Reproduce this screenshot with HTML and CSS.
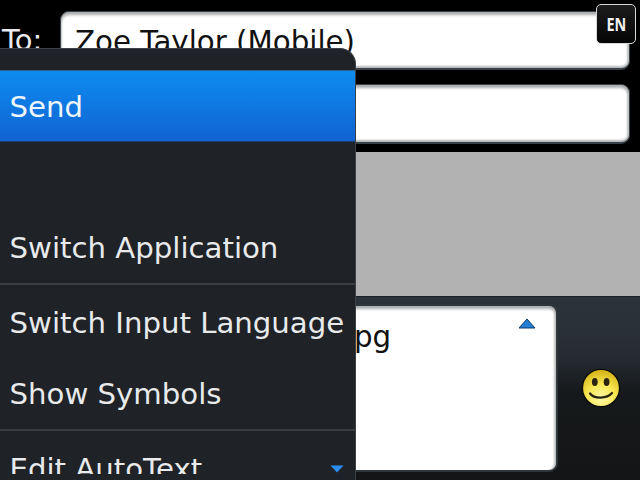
FILE: index.html
```html
<!DOCTYPE html>
<html lang="en">
<head>
<meta charset="utf-8">
<title>Compose message</title>
<link rel="stylesheet" href="styles.css">
</head>
<body>
<div class="screen">
  <header class="fields">
    <div class="field-row">
      <span class="to-label">To:</span>
      <div class="field field-to">Zoe Taylor (Mobile)</div>
    </div>
    <div class="field-row field-row-second">
      <div class="field field-second"></div>
    </div>
  </header>
  <div class="grey-area"></div>
  <div class="compose">
    <div class="compose-box">
      <span class="compose-text">pg</span>
      <svg class="scroll-up" width="18" height="11" viewBox="0 0 18 11"><path d="M1 10 L9 1 L17 10 Z" fill="#1f7fd6" stroke="#123a66" stroke-width="1"/></svg>
    </div>
    <div class="smiley-cell">
      <svg width="40" height="40" viewBox="0 0 40 40">
        <defs>
          <radialGradient id="face" cx="50%" cy="78%" r="72%">
            <stop offset="0" stop-color="#fff9a8"/>
            <stop offset="0.55" stop-color="#f8e650"/>
            <stop offset="1" stop-color="#d8b81c"/>
          </radialGradient>
        </defs>
        <circle cx="20" cy="20" r="18.6" fill="url(#face)" stroke="#0c0c08" stroke-width="1.4"/>
        <ellipse cx="13.8" cy="14" rx="2.9" ry="4" fill="#2a2410"/>
        <ellipse cx="25.6" cy="14" rx="2.9" ry="4" fill="#2a2410"/>
        <path d="M9 25.5 C13 31 26 31 31 25" fill="none" stroke="#2a2410" stroke-width="2.2" stroke-linecap="round"/>
      </svg>
    </div>
  </div>

  <div class="lang-badge"><span class="lang-text">EN</span></div>

  <nav class="menu">
    <div class="menu-item selected">Send</div>
    <div class="menu-item"></div>
    <div class="menu-item divided first-group">Switch Application</div>
    <div class="menu-item tall">Switch Input Language</div>
    <div class="menu-item divided short">Show Symbols</div>
    <div class="menu-item last">Edit AutoText</div>
    <svg class="scroll-down" width="14" height="8" viewBox="0 0 14 8"><path d="M0.5 0.5 H13.5 L7 7.5 Z" fill="#2a8ff0"/></svg>
  </nav>
</div>
</body>
</html>
```

FILE: styles.css
```css
* { box-sizing: border-box; }
html, body { margin: 0; padding: 0; }
body {
  width: 640px;
  height: 480px;
  overflow: hidden;
  background: #000;
  font-family: "DejaVu Sans", sans-serif;
}
.screen {
  position: relative;
  width: 640px;
  height: 480px;
  display: flex;
  flex-direction: column;
  overflow: hidden;
}
.fields {
  height: 152px;
  padding: 10px 10px 0 2px;
  background: #000;
}
.field-row { display: flex; align-items: center; }
.field-row-second { margin-top: 14px; padding-left: 58px; }
.to-label {
  width: 58px;
  font-size: 29px;
  line-height: 59px;
  padding-top: 1px;
  color: #e8eaec;
}
.field {
  flex: 1;
  border: 1px solid #3a4249;
  border-bottom-width: 2px;
  border-radius: 9px;
  background: #fff;
  box-shadow: inset 0 4px 3px -1px #a9abac, inset 0 -3px 2px -1px #b5b7b8, inset 2px 0 2px -1px #c8caca, inset -3px 0 2px -1px #c0c2c2;
  color: #111;
  font-size: 29.3px;
}
.field-to { height: 59px; line-height: 60px; padding-left: 14px; }
.field-second { height: 60px; }
.grey-area { height: 144px; background: #b2b2b2; }
.compose {
  flex: 1;
  display: flex;
  padding: 7px 0 8px 60px;
  background: linear-gradient(#2c343b 0, #262c32 32%, #16191b 52%, #141516 100%);
  border-top: 1px solid #1d2226;
}
.compose-box {
  position: relative;
  width: 498px;
  border: 2px solid #2f363c;
  border-radius: 9px;
  background: #fff;
  box-shadow: inset 0 5px 3px -2px #a9abac, inset -3px 0 2px -1px #c0c2c2;
  color: #111;
  font-size: 29.3px;
  line-height: 62px;
  padding: 0 0 0 292px;
}
.scroll-up { position: absolute; top: 12px; right: 20px; }
.smiley-cell {
  flex: 1;
  display: flex;
  align-items: center;
  justify-content: center;
  padding: 0 2px 0 6px;
}
.lang-badge {
  position: absolute;
  top: 4px;
  left: 596px;
  width: 40px;
  height: 40px;
  border: 1px solid #d8d8d8;
  border-radius: 5px;
  background: linear-gradient(#1c1c1c, #050505);
  color: #f2f2f2;
  font-family: "Open Sans", "Noto Sans", sans-serif;
  font-weight: 700;
  font-size: 18px;
  line-height: 38px;
  text-align: center;
}
.lang-text { display: inline-block; transform: scaleX(0.8); }
.menu {
  position: absolute;
  left: 0;
  top: 48px;
  width: 356px;
  height: 432px;
  padding-top: 22px;
  background: #1f2226;
  border-top: 1px solid #3b4046;
  border-right: 1px solid #3b4046;
  border-top-right-radius: 16px;
  overflow: hidden;
}
.menu-item {
  height: 71px;
  line-height: 71px;
  padding-left: 9.5px;
  color: #e8eaec;
  font-size: 29.2px;
  white-space: nowrap;
}
.menu-item.selected {
  height: 72px;
  margin-top: -1px;
  line-height: 72px;
  border-top: 1px solid #2b5f8f;
  border-bottom: 1px solid #17406f;
  background: linear-gradient(#0d8cf0, #1163d2);
  color: #eef6fd;
}
.menu-item.divided { border-bottom: 2px solid #3a3e43; height: 73px; }
.menu-item.first-group { height: 72px; }
.menu-item.tall { height: 73px; line-height: 76px; }
.menu-item.short { height: 73px; line-height: 73px; }
.menu-item.last { height: 43px; line-height: 77px; overflow: hidden; }
.scroll-down { position: absolute; right: 11px; top: 416px; }
```
